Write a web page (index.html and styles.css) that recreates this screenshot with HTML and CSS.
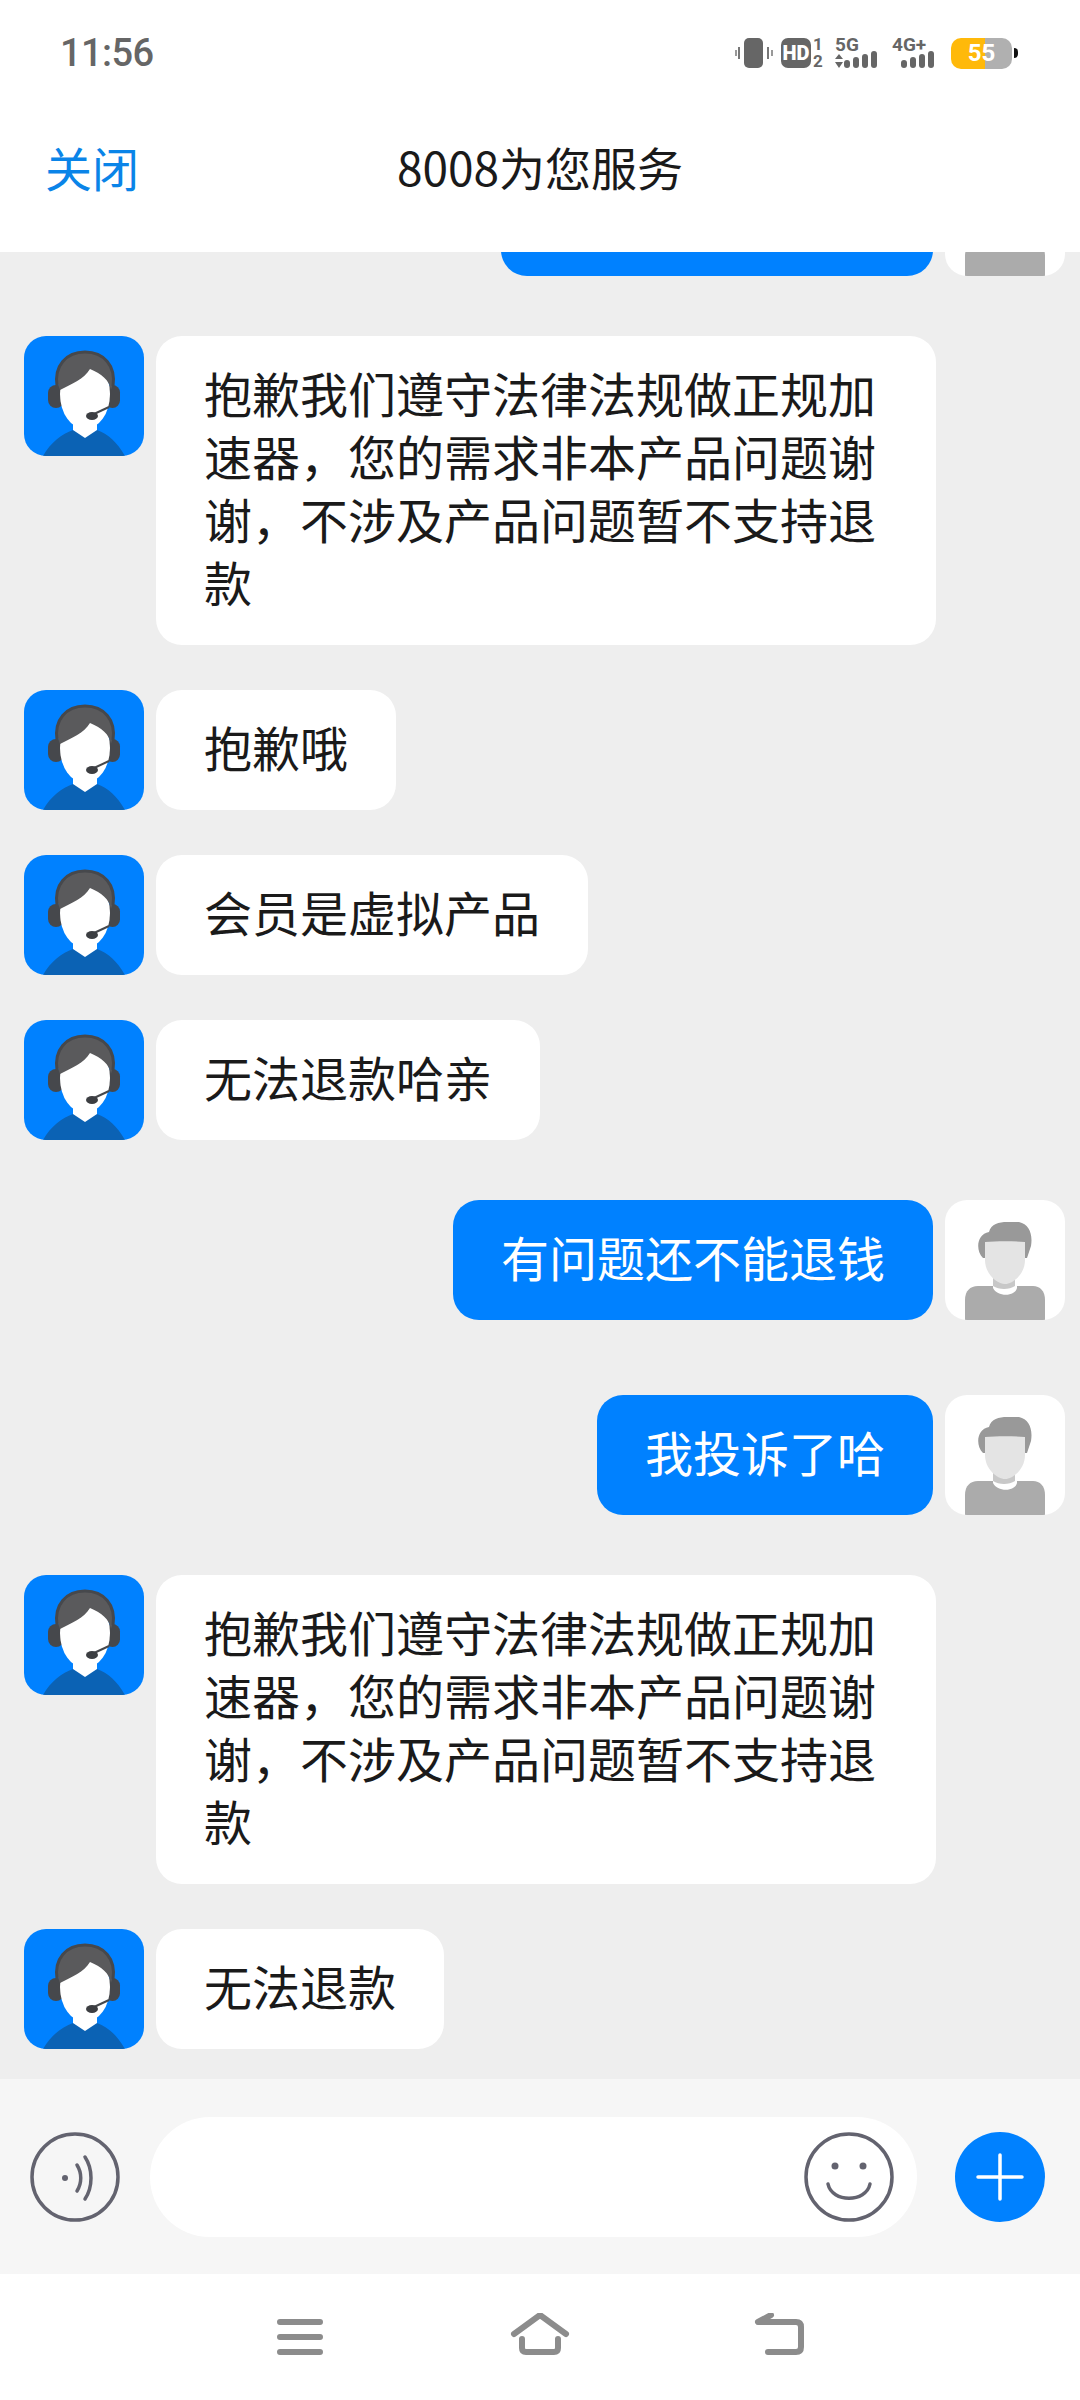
FILE: index.html
```html
<!DOCTYPE html>
<html lang="zh-CN">
<head>
    <meta charset="UTF-8">
    <meta name="viewport" content="width=device-width, initial-scale=1.0">
    <title>8008为您服务</title>
    <link rel="stylesheet" href="styles.css">
</head>
<body>
  <!-- avatars are reused by every row -->
  <svg class="defs" width="0" height="0">
    <symbol id="agent" viewBox="0 0 120 120">
      <rect width="120" height="120" fill="#0081ff"/>
      <path d="M19 120 C27 106 38 98 49 94 L61 101 L73 94 C84 98 93 106 101 120 Z" fill="#0b62b4"/>
      <path d="M49 84 H73 V94 L61 102 L49 94 Z" fill="#fff"/>
      <rect x="24" y="49" width="16" height="23" rx="8" fill="#46484c"/>
      <rect x="81" y="49" width="15" height="23" rx="7.5" fill="#46484c"/>
      <ellipse cx="61" cy="58" rx="25" ry="35" fill="#fff"/>
      <path d="M36 54 C29 36 36 16 61 16 C84 16 94 36 87 54 C85 44 78 38 66 33 C60 43 48 48 36 54 Z" fill="#5a5a5c"/>
      <path d="M33 50 C30 30 42 16 61 16 C80 16 92 30 89 50" fill="none" stroke="#46484c" stroke-width="3"/>
      <path d="M85 71 L70 78" stroke="#46484c" stroke-width="2" fill="none"/>
      <ellipse cx="68" cy="80" rx="6" ry="4" fill="#3c3e42"/>
    </symbol>
    <symbol id="user" viewBox="0 0 120 120">
      <rect width="120" height="120" fill="#fff"/>
      <path d="M20 120 V100 C20 91 25 86 33 86 H88 C95 86 100 91 100 100 V120 Z" fill="#ababab"/>
      <path d="M48 84 H72 V88 C70 97 52 97 48 88 Z" fill="#fff"/>
      <path d="M48 78 H70 V86 C64 90 54 90 48 86 Z" fill="#c8c8c8"/>
      <path d="M38 58 C30 50 32 34 44 32 C46 24 54 22 62 22 H74 C84 24 88 34 86 46 L82 58 Z" fill="#999"/>
      <path d="M40 42 C52 41 68 41 80 42 V60 C80 74 68 84 60 84 C52 84 40 74 40 60 Z" fill="#e4e4e4"/>
    </symbol>
  </svg>

  <div class="statusbar">
    <span class="time">11:56</span>
    <div class="status-icons">
      <svg width="42" height="32" viewBox="0 0 42 32">
        <rect x="11" y="1" width="19" height="30" rx="5" fill="#666"/>
        <rect x="5" y="10" width="2" height="12" fill="#777"/>
        <rect x="2" y="13" width="2" height="6" fill="#999"/>
        <rect x="34" y="10" width="2" height="12" fill="#777"/>
        <rect x="38" y="13" width="2" height="6" fill="#999"/>
      </svg>
      <div class="hd">HD</div>
      <div class="sim"><span>1</span><span>2</span></div>
      <svg class="net-five" width="46" height="48" viewBox="0 -8 46 48">
        <text x="2" y="14" class="net-label">5G</text>
        <path d="M2 22 L6 17 L10 22 Z M2 25 L10 25 L6 31 Z" fill="#666"/>
        <rect x="11" y="23" width="6" height="8" rx="3" fill="#666"/>
        <rect x="20" y="20" width="6" height="11" rx="3" fill="#666"/>
        <rect x="29" y="17" width="6" height="14" rx="3" fill="#666"/>
        <rect x="38" y="14" width="6" height="17" rx="3" fill="#666"/>
      </svg>
      <svg class="net-four" width="46" height="48" viewBox="0 -8 46 48">
        <text x="2" y="14" class="net-label">4G+</text>
        <rect x="11" y="23" width="6" height="8" rx="3" fill="#666"/>
        <rect x="20" y="20" width="6" height="11" rx="3" fill="#666"/>
        <rect x="29" y="17" width="6" height="14" rx="3" fill="#666"/>
        <rect x="38" y="14" width="6" height="17" rx="3" fill="#666"/>
      </svg>
      <div class="battery"><span>55</span></div>
      <div class="battery-tip"></div>
    </div>
  </div>

  <div class="header">
    <span class="close">关闭</span>
    <span class="title">8008为您服务</span>
  </div>

  <div class="chat">
    <div class="row right">
      <div class="bubble cut-off"></div>
      <svg class="avatar"><use href="#user"/></svg>
    </div>
    <div class="row left">
      <svg class="avatar"><use href="#agent"/></svg>
      <div class="bubble">抱歉我们遵守法律法规做正规加速器，您的需求非本产品问题谢谢，不涉及产品问题暂不支持退款</div>
    </div>
    <div class="row left">
      <svg class="avatar"><use href="#agent"/></svg>
      <div class="bubble">抱歉哦</div>
    </div>
    <div class="row left">
      <svg class="avatar"><use href="#agent"/></svg>
      <div class="bubble">会员是虚拟产品</div>
    </div>
    <div class="row left">
      <svg class="avatar"><use href="#agent"/></svg>
      <div class="bubble">无法退款哈亲</div>
    </div>
    <div class="row right">
      <div class="bubble">有问题还不能退钱</div>
      <svg class="avatar"><use href="#user"/></svg>
    </div>
    <div class="row right">
      <div class="bubble">我投诉了哈</div>
      <svg class="avatar"><use href="#user"/></svg>
    </div>
    <div class="row left">
      <svg class="avatar"><use href="#agent"/></svg>
      <div class="bubble">抱歉我们遵守法律法规做正规加速器，您的需求非本产品问题谢谢，不涉及产品问题暂不支持退款</div>
    </div>
    <div class="row left">
      <svg class="avatar"><use href="#agent"/></svg>
      <div class="bubble">无法退款</div>
    </div>
  </div>

  <div class="inputbar">
    <svg class="round-icon" viewBox="0 0 90 90">
      <circle cx="45" cy="45" r="43" fill="none" stroke="#63636f" stroke-width="3.5"/>
      <circle cx="35" cy="46" r="3" fill="#63636f"/>
      <path d="M47 33 C52 41 52 51 47 59" fill="none" stroke="#63636f" stroke-width="3.5" stroke-linecap="round"/>
      <path d="M55 25 C63 37 63 55 55 67" fill="none" stroke="#63636f" stroke-width="3.5" stroke-linecap="round"/>
    </svg>
    <div class="input">
      <svg class="round-icon" viewBox="0 0 90 90">
        <circle cx="45" cy="45" r="43" fill="none" stroke="#63636f" stroke-width="3.5"/>
        <circle cx="31" cy="34" r="3.5" fill="#63636f"/>
        <circle cx="59" cy="34" r="3.5" fill="#63636f"/>
        <path d="M24 52 C28 71 62 71 66 52" fill="none" stroke="#63636f" stroke-width="3.5" stroke-linecap="round"/>
      </svg>
    </div>
    <svg class="round-icon" viewBox="0 0 90 90">
      <circle cx="45" cy="45" r="45" fill="#0081ff"/>
      <path d="M23 45 H67 M45 23 V67" stroke="#fff" stroke-width="3.5" stroke-linecap="round"/>
    </svg>
  </div>

  <div class="navbar">
    <svg class="nav-icon" viewBox="0 0 60 48">
      <path d="M10 9 H50 M10 24 H50 M10 39 H50" stroke="#8c8c8c" stroke-width="6" stroke-linecap="round"/>
    </svg>
    <svg class="nav-icon" viewBox="0 0 60 48">
      <path d="M4 21 L30 2 L56 21 M12 26 V35 Q12 39 16 39 H44 Q48 39 48 35 V26" fill="none" stroke="#8c8c8c" stroke-width="6" stroke-linecap="round" stroke-linejoin="round"/>
    </svg>
    <svg class="nav-icon" viewBox="0 0 60 48">
      <path d="M21 2 L8 9 H46 Q51 9 51 14 V34 Q51 39 46 39 H18" fill="none" stroke="#8c8c8c" stroke-width="6" stroke-linecap="round" stroke-linejoin="round"/>
    </svg>
  </div>
</body>
</html>
```

FILE: styles.css
```css
body {
    margin: 0;
    width: 1080px;
    height: 2400px;
    display: flex;
    flex-direction: column;
    overflow: hidden;
    font-family: "Noto Sans CJK SC", "Noto Sans", sans-serif;
    background-color: #fff;
    color: #1a1a1a;
}

.defs {
    position: absolute;
}

.statusbar {
    height: 106px;
    flex-shrink: 0;
    display: flex;
    align-items: center;
    justify-content: space-between;
    padding: 0 62px 0 60px;
}

.time {
    font-family: Roboto, sans-serif;
    font-size: 38px;
    font-weight: 500;
    letter-spacing: -0.6px;
    color: #666;
}

.status-icons {
    display: flex;
    align-items: center;
}

.hd {
    width: 30px;
    height: 30px;
    margin-left: 6px;
    border-radius: 7px;
    background-color: #666;
    color: #fff;
    font-family: Roboto, sans-serif;
    font-size: 20px;
    font-weight: 900;
    line-height: 30px;
    text-align: center;
}

.sim {
    display: flex;
    flex-direction: column;
    margin-left: 2px;
    width: 10px;
    height: 32px;
    justify-content: space-between;
    font-family: Roboto, sans-serif;
    font-size: 17px;
    font-weight: 700;
    line-height: 15px;
    color: #666;
    text-align: center;
}

.net-five {
    margin-left: 10px;
}

.net-four {
    margin-left: 11px;
}

.net-label {
    font-family: Roboto, sans-serif;
    font-size: 19px;
    font-weight: 700;
    fill: #666;
}

.battery {
    width: 61px;
    height: 31px;
    margin-left: 15px;
    border-radius: 10px;
    background: linear-gradient(to right, #ffb90a 34px, #b0b0b0 34px);
    color: #fff;
    font-family: Roboto, sans-serif;
    font-size: 24px;
    font-weight: 700;
    line-height: 31px;
    text-align: center;
}

.battery-tip {
    width: 4px;
    height: 10px;
    margin-left: 2px;
    border-radius: 0 5px 5px 0;
    background-color: #111;
}

.header {
    height: 146px;
    flex-shrink: 0;
    position: relative;
    display: flex;
    align-items: center;
    justify-content: center;
    padding-bottom: 26px;
    box-sizing: border-box;
    background-color: #fff;
    z-index: 1;
}

.close {
    position: absolute;
    left: 45px;
    font-size: 47px;
    color: #0a84e8;
}

.title {
    font-size: 46px;
}

.chat {
    flex: 1;
    min-height: 0;
    display: flex;
    flex-direction: column;
    justify-content: flex-end;
    background-color: #eeeeee;
    overflow: hidden;
}

.row {
    display: flex;
    flex-shrink: 0;
    align-items: flex-start;
    gap: 12px;
}

.row.left {
    padding: 0 0 45px 24px;
}

.row.left:last-child {
    padding-bottom: 30px;
}

.row.right {
    justify-content: flex-end;
    padding: 15px 15px 60px 0;
}

.avatar {
    width: 120px;
    height: 120px;
    flex-shrink: 0;
    border-radius: 22px;
}

.bubble {
    box-sizing: border-box;
    max-width: 780px;
    min-height: 120px;
    padding: 25px 48px 32px;
    border-radius: 26px;
    background-color: #fff;
    font-size: 48px;
    line-height: 63px;
}

.right .bubble {
    background-color: #0081ff;
    color: #fff;
}

/* message scrolled away under the header */
.cut-off {
    width: 432px;
}

.inputbar {
    height: 195px;
    flex-shrink: 0;
    display: flex;
    align-items: center;
    box-sizing: border-box;
    padding-left: 30px;
    background-color: #f6f6f6;
}

.round-icon {
    width: 90px;
    height: 90px;
    flex-shrink: 0;
}

.input {
    width: 767px;
    height: 120px;
    margin: 0 38px 0 30px;
    display: flex;
    align-items: center;
    justify-content: flex-end;
    box-sizing: border-box;
    padding-right: 23px;
    border-radius: 60px;
    background-color: #fff;
}

.navbar {
    flex: 0 0 126px;
    display: flex;
    justify-content: center;
    gap: 180px;
    padding-top: 39px;
    box-sizing: border-box;
    background-color: #fff;
}

.nav-icon {
    width: 60px;
    height: 48px;
}
```
